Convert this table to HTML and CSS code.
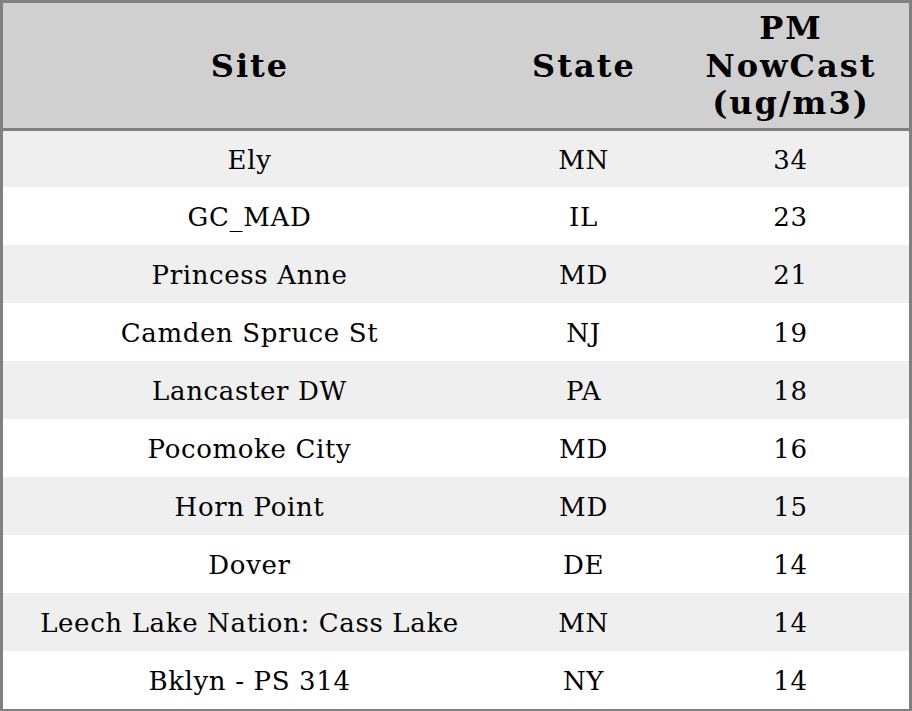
FILE: index.html
```html
<!DOCTYPE html>
<html>
<head>
<meta charset="utf-8">
<link rel="stylesheet" href="styles.css">
</head>
<body>
<table class="aq-table">
  <colgroup>
    <col class="col-site">
    <col class="col-state">
    <col class="col-pm">
  </colgroup>
  <thead>
    <tr>
      <th>Site</th>
      <th>State</th>
      <th>PM<br>NowCast<br>(ug/m3)</th>
    </tr>
  </thead>
  <tbody>
    <tr><td>Ely</td><td>MN</td><td>34</td></tr>
    <tr><td>GC_MAD</td><td>IL</td><td>23</td></tr>
    <tr><td>Princess Anne</td><td>MD</td><td>21</td></tr>
    <tr><td>Camden Spruce St</td><td>NJ</td><td>19</td></tr>
    <tr><td>Lancaster DW</td><td>PA</td><td>18</td></tr>
    <tr><td>Pocomoke City</td><td>MD</td><td>16</td></tr>
    <tr><td>Horn Point</td><td>MD</td><td>15</td></tr>
    <tr><td>Dover</td><td>DE</td><td>14</td></tr>
    <tr><td>Leech Lake Nation: Cass Lake</td><td>MN</td><td>14</td></tr>
    <tr><td>Bklyn - PS 314</td><td>NY</td><td>14</td></tr>
  </tbody>
</table>
</body>
</html>
```
FILE: styles.css
```css
html, body {
  margin: 0;
  padding: 0;
  background: #ffffff;
}

.aq-table {
  width: 912px;
  table-layout: fixed;
  border-collapse: separate;
  border-spacing: 0;
  border: 3px solid #808080;
  font-family: "DejaVu Serif", serif;
  color: #000000;
}

.col-site { width: 492px; }
.col-state { width: 176px; }
.col-pm { width: 238px; }

.aq-table th {
  box-sizing: border-box;
  background: #d0d0d0;
  font-size: 32px;
  font-weight: bold;
  line-height: 37.5px;
  letter-spacing: 2px;
  height: 128px;
  padding: 2px 0 0 2px;
  text-align: center;
  vertical-align: middle;
  border-bottom: 3px solid #808080;
}

.aq-table td {
  box-sizing: border-box;
  font-size: 26px;
  letter-spacing: 0.65px;
  height: 58px;
  padding: 2px 0 0 1px;
  text-align: center;
  vertical-align: middle;
  white-space: nowrap;
}

.aq-table tbody tr:nth-child(odd) td {
  background: #efefef;
}

.aq-table tbody tr:first-child td {
  height: 56px;
}
```
